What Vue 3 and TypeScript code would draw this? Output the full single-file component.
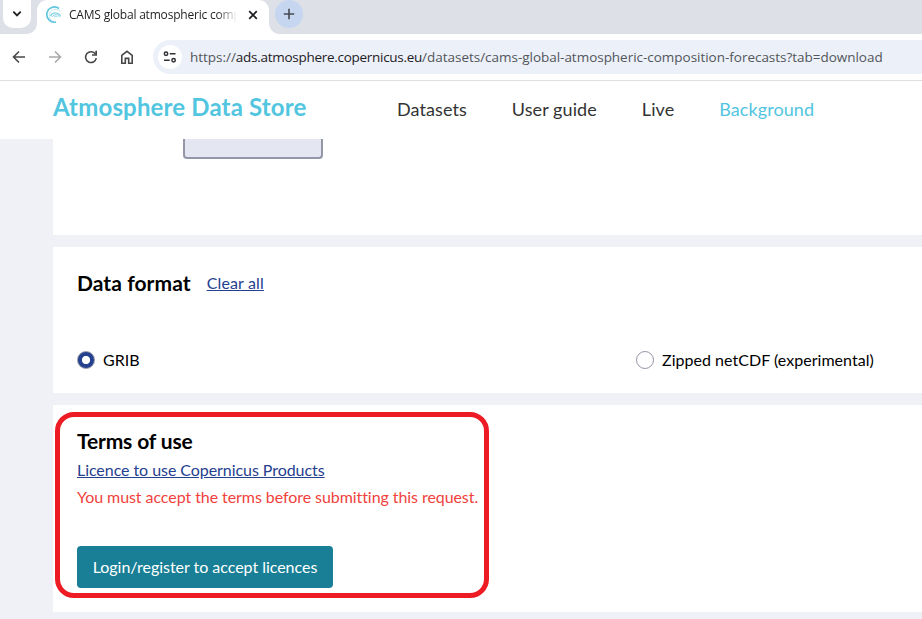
<script setup lang="ts">
import { ref } from 'vue'

interface FormatOption {
  id: string
  label: string
}

const navItems: string[] = ['Datasets', 'User guide', 'Live', 'Background']
const activeNav = 'Background'
const formats: FormatOption[] = [
  { id: 'grib', label: 'GRIB' },
  { id: 'netcdf', label: 'Zipped netCDF (experimental)' },
]
const selected = ref<string>('grib')
</script>

<template>
  <div class="window">
    <div class="tabstrip">
      <button class="tab-search" aria-label="Search tabs">
        <svg width="10" height="8" viewBox="0 0 10 8"><path d="M1.3 1.7 5 5.4 8.7 1.7" fill="none" stroke="#1f2023" stroke-width="1.9" /></svg>
      </button>
      <div class="tab">
        <svg class="favicon" width="18" height="18" viewBox="0 0 18 18" fill="none" stroke="#5cc5dc">
          <path d="M14 2.500A7.600 7.600 0 1 0 11 16" stroke-width="1.600" />
          <path d="M15.500 5C12.500 2.600 7.500 2.800 5 6.300c-1.700 3-.8 6 1.500 8" stroke-width=".7" opacity=".55" />
          <path d="M5.500 10C6.800 6.300 13.200 5.800 15.500 9.800" stroke-width="1.200" opacity=".85" />
          <path d="M7 11c2-3 6.300-3 8.300 0" stroke-width=".9" opacity=".8" />
          <path d="M9 11.200c1.200-1 3.200-1 4.400 0" stroke-width=".8" opacity=".7" />
        </svg>
        <span class="tab-title">CAMS global atmospheric comp</span>
        <svg class="close" width="10" height="10" viewBox="0 0 10 10"><path d="M1.200 1.200 8.800 8.800M8.800 1.200 1.200 8.800" stroke="#1f2023" stroke-width="1.800" /></svg>
      </div>
      <button class="new-tab" aria-label="New tab">
        <svg width="12" height="12" viewBox="0 0 12 12"><path d="M6 .8v10.400M.8 6h10.400" stroke="#474a50" stroke-width="1.600" /></svg>
      </button>
    </div>

    <div class="toolbar">
      <svg class="nav-icon" width="14" height="14" viewBox="0 0 14 14"><path d="M13 7H1.800M7 1.500 1.500 7 7 12.500" fill="none" stroke="#474747" stroke-width="1.600" /></svg>
      <svg class="nav-icon" width="14" height="14" viewBox="0 0 14 14"><path d="M1 7h11.200M7 1.500 12.500 7 7 12.500" fill="none" stroke="#a9a9a9" stroke-width="1.600" /></svg>
      <svg class="nav-icon" width="14" height="14" viewBox="0 0 14 14"><path d="M12.300 8.200A5.400 5.400 0 1 1 11.500 4.100" fill="none" stroke="#474747" stroke-width="1.600" /><path d="M13 .8V5.800H8V4.200h3.300V.8z" fill="#474747" /></svg>
      <svg class="nav-icon" width="14" height="14" viewBox="0 0 14 14"><path d="M1.800 5.300 7 1.300l5.200 4v7.900H8.700V8.400H5.300v4.800H1.800z" fill="none" stroke="#474747" stroke-width="1.600" /></svg>
      <div class="address">
        <span class="site-info">
          <svg width="14" height="12" viewBox="0 0 14 12" fill="none" stroke="#303134" stroke-width="1.500"><circle cx="3" cy="2.800" r="1.700" /><path d="M6.800 2.800h5.700M1 9.200h5.700" /><circle cx="10.600" cy="9.200" r="1.700" /></svg>
        </span>
        <span class="url">https://<b>ads.atmosphere.copernicus.eu</b>/datasets/cams-global-atmospheric-composition-forecasts?tab=download</span>
      </div>
    </div>

    <header class="site-header">
      <div class="brand">Atmosphere Data Store</div>
      <nav class="site-nav">
        <a v-for="item in navItems" :key="item" :class="{ active: item === activeNav }">{{ item }}</a>
      </nav>
    </header>

    <main class="page">
      <section class="card card-top">
        <div class="field-box"></div>
      </section>

      <section class="card card-format">
        <div class="heading-row">
          <h2>Data format</h2>
          <a class="link clear">Clear all</a>
        </div>
        <div class="options">
          <label v-for="f in formats" :key="f.id" class="option" @click="selected = f.id">
            <span class="radio" :class="{ checked: selected === f.id }"></span>
            <span>{{ f.label }}</span>
          </label>
        </div>
      </section>

      <section class="card card-terms">
        <h2>Terms of use</h2>
        <a class="link licence">Licence to use Copernicus Products</a>
        <p class="warning">You must accept the terms before submitting this request.</p>
        <button class="login">Login/register to accept licences</button>
        <div class="highlight"></div>
      </section>
    </main>
  </div>
</template>

<style>
body {
  margin: 0;
  overflow: hidden;
}
</style>

<style scoped>
* {
  box-sizing: border-box;
}
.window {
  width: 922px;
  height: 619px;
  overflow: hidden;
  background: #f0f1f6;
  font-family: Lato, 'Liberation Sans', sans-serif;
  font-size: 16px;
  color: #000;
  white-space: nowrap;
}
button {
  border: 0;
  padding: 0;
  font: inherit;
}
svg {
  display: block;
  flex: none;
}
.tabstrip {
  display: flex;
  align-items: flex-start;
  height: 34px;
  padding-left: 3px;
  background: #dde1e7;
}
.tab-search {
  display: flex;
  align-items: center;
  justify-content: center;
  width: 28px;
  height: 28px;
  border-radius: 0 0 10px 10px;
  background: #fff;
}
.tab {
  position: relative;
  display: flex;
  align-items: center;
  width: 232px;
  height: 34px;
  margin-left: 6px;
  padding: 0 10px 5px 8px;
  border-radius: 10px 10px 0 0;
  background: #fff;
}
.tab::before,
.tab::after {
  content: '';
  position: absolute;
  bottom: 0;
  width: 10px;
  height: 10px;
}
.tab::before {
  left: -10px;
  background: radial-gradient(circle at 0 0, transparent 9.5px, #fff 10px);
}
.tab::after {
  right: -10px;
  background: radial-gradient(circle at 100% 0, transparent 9.5px, #fff 10px);
}
.tab-title {
  width: 168px;
  margin-left: 6px;
  font: 12px/20px 'Open Sans', 'Noto Sans', sans-serif;
  letter-spacing: -0.2px;
  color: #1f2023;
  mask-image: linear-gradient(to right, #000 148px, transparent 168px);
}
.close {
  margin-left: 11px;
}
.new-tab {
  display: flex;
  align-items: center;
  justify-content: center;
  width: 28px;
  height: 28px;
  margin-left: 6px;
  border-radius: 50%;
  background: #c6d6f1;
}
.toolbar {
  display: flex;
  align-items: center;
  height: 47px;
  padding-left: 12px;
  border-bottom: 1px solid #dfe0e2;
  background: #fff;
}
.nav-icon {
  margin-right: 22px;
}
.address {
  display: flex;
  align-items: center;
  flex: 1;
  height: 34px;
  margin-left: -3px;
  padding-left: 5px;
  border-radius: 17px 0 0 17px;
  background: #ebf0f9;
}
.site-info {
  display: flex;
  align-items: center;
  justify-content: center;
  flex: none;
  width: 24px;
  height: 24px;
  border-radius: 50%;
  background: #fff;
}
.url {
  margin-left: 8px;
  font: 13.5px/20px 'Open Sans', 'Noto Sans', sans-serif;
  letter-spacing: -0.025px;
  color: #53565a;
}
.url b {
  font-weight: 400;
  letter-spacing: -0.28px;
  color: #1f2023;
}
.site-header {
  display: flex;
  align-items: center;
  height: 58px;
  padding: 0 0 2px 53px;
  background: #fff;
}
.brand {
  width: 344px;
  padding-bottom: 5px;
  font-size: 24px;
  font-weight: 700;
  line-height: 30px;
  letter-spacing: 0.16px;
  color: #52c5df;
}
.site-nav {
  display: flex;
  gap: 45px;
  font-size: 18px;
  line-height: 24px;
  letter-spacing: 0.08px;
  color: #333;
}
.site-nav .active {
  color: #52c5df;
}
.page {
  display: flex;
  flex-direction: column;
  gap: 12px;
  padding-left: 53px;
}
.card {
  background: #fff;
}
.card-top {
  height: 96px;
  padding-left: 130px;
}
.field-box {
  width: 140px;
  height: 20px;
  border: 2px solid #9597a8;
  border-top: 0;
  border-radius: 0 0 4px 4px;
  background: #e4e7f1;
}
.card-format {
  height: 146px;
  padding: 22px 0 0 24px;
}
h2 {
  margin: 0;
  font-size: 21px;
  font-weight: 700;
  line-height: 28px;
}
.heading-row {
  display: flex;
  align-items: center;
  gap: 16px;
}
.heading-row h2 {
  letter-spacing: 0.07px;
}
.card-terms h2 {
  letter-spacing: -0.15px;
}
.link {
  color: #25408f;
  line-height: 24px;
  text-decoration: underline;
}
.clear {
  letter-spacing: 0.15px;
}
.options {
  display: grid;
  grid-template-columns: 559px 1fr;
  margin-top: 51px;
}
.option {
  display: flex;
  align-items: center;
  gap: 8px;
  line-height: 24px;
  letter-spacing: 0.03px;
}
.radio {
  width: 18px;
  height: 18px;
  border: 1px solid #9597a8;
  border-radius: 50%;
  background: #fff;
}
.radio.checked {
  background: radial-gradient(circle, #fff 3.7px, #25408f 4.500px);
}
.card-terms {
  position: relative;
  display: flex;
  flex-direction: column;
  align-items: flex-start;
  height: 207px;
  padding: 22px 0 0 24px;
}
.licence {
  margin-top: 3px;
  letter-spacing: -0.06px;
}
.warning {
  margin: 3px 0 0;
  line-height: 24px;
  letter-spacing: -0.07px;
  color: #f0423c;
}
.login {
  width: 256px;
  height: 42px;
  margin-top: 37px;
  padding-bottom: 2px;
  border-radius: 4px;
  background: #197f96;
  letter-spacing: -0.03px;
  color: #fff;
}
.highlight {
  position: absolute;
  top: 7px;
  left: 2px;
  width: 434px;
  height: 186px;
  border: 5px solid #ed1c24;
  border-radius: 19px;
}
</style>
